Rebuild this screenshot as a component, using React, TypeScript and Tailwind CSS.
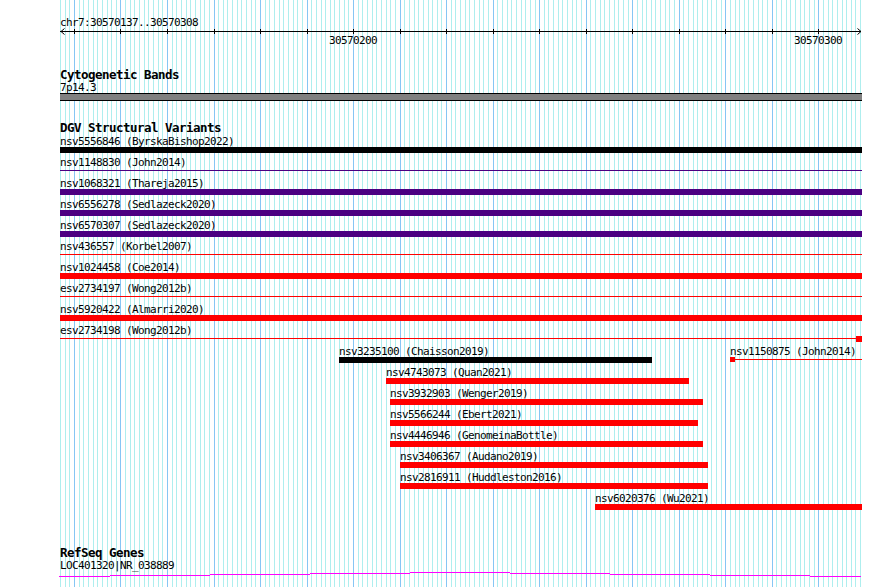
import { FC } from "react";

const LEFT = 60;
const WIDTH = 802;
const PX_PER_BP = 4.652;
const BP_COUNT = 172;

const xAt = (k: number) => Math.round(LEFT + k * PX_PER_BP);

type Feature = {
  label: string;
  x1: number;
  x2: number;
  kind: "thick" | "thin";
  color: string;
  endBox?: "start" | "end";
  boxSize?: number;
};

const colorClass: Record<string, { bg: string }> = {
  black: { bg: "bg-black" },
  purple: { bg: "bg-[#4b0082]" },
  red: { bg: "bg-[#ff0000]" },
};

const rows: Feature[][] = [
  [{ label: "nsv5556846 (ByrskaBishop2022)", x1: 60, x2: 862, kind: "thick", color: "black" }],
  [{ label: "nsv1148830 (John2014)", x1: 60, x2: 862, kind: "thin", color: "purple" }],
  [{ label: "nsv1068321 (Thareja2015)", x1: 60, x2: 862, kind: "thick", color: "purple" }],
  [{ label: "nsv6556278 (Sedlazeck2020)", x1: 60, x2: 862, kind: "thick", color: "purple" }],
  [{ label: "nsv6570307 (Sedlazeck2020)", x1: 60, x2: 862, kind: "thick", color: "purple" }],
  [{ label: "nsv436557 (Korbel2007)", x1: 60, x2: 862, kind: "thin", color: "red" }],
  [{ label: "nsv1024458 (Coe2014)", x1: 60, x2: 862, kind: "thick", color: "red" }],
  [{ label: "esv2734197 (Wong2012b)", x1: 60, x2: 862, kind: "thin", color: "red" }],
  [{ label: "nsv5920422 (Almarri2020)", x1: 60, x2: 862, kind: "thick", color: "red" }],
  [
    {
      label: "esv2734198 (Wong2012b)",
      x1: 60,
      x2: 862,
      kind: "thin",
      color: "red",
      endBox: "end",
      boxSize: 6,
    },
  ],
  [
    { label: "nsv3235100 (Chaisson2019)", x1: 339, x2: 652, kind: "thick", color: "black" },
    {
      label: "nsv1150875 (John2014)",
      x1: 730,
      x2: 862,
      kind: "thin",
      color: "red",
      endBox: "start",
      boxSize: 5,
    },
  ],
  [{ label: "nsv4743073 (Quan2021)", x1: 386, x2: 689, kind: "thick", color: "red" }],
  [{ label: "nsv3932903 (Wenger2019)", x1: 390, x2: 703, kind: "thick", color: "red" }],
  [{ label: "nsv5566244 (Ebert2021)", x1: 390, x2: 698, kind: "thick", color: "red" }],
  [{ label: "nsv4446946 (GenomeinaBottle)", x1: 390, x2: 703, kind: "thick", color: "red" }],
  [{ label: "nsv3406367 (Audano2019)", x1: 400, x2: 708, kind: "thick", color: "red" }],
  [{ label: "nsv2816911 (Huddleston2016)", x1: 400, x2: 708, kind: "thick", color: "red" }],
  [{ label: "nsv6020376 (Wu2021)", x1: 595, x2: 862, kind: "thick", color: "red" }],
];

const geneSteps: [number, number, number][] = [
  [59, 110, 576],
  [110, 210, 575],
  [210, 310, 574],
  [310, 410, 573],
  [410, 510, 572],
  [510, 610, 573],
  [610, 710, 574],
  [710, 810, 575],
  [810, 861, 576],
];

const labelText = "text-[11px] leading-[11px] tracking-[-0.62px] whitespace-nowrap";
const titleText =
  "text-[12.5px] leading-[12px] font-bold tracking-[-0.53px] whitespace-nowrap";

const GridLines: FC = () => {
  const lines = [];
  for (let k = 0; k <= BP_COUNT; k++) {
    const x = xAt(k) + 0.5;
    lines.push(
      <line
        key={k}
        x1={x}
        x2={x}
        y1={0}
        y2={587}
        stroke={k % 10 === 3 ? "#86c6f4" : "#aeeeee"}
        strokeWidth={1}
      />
    );
  }
  return (
    <svg
      className="absolute left-0 top-0"
      width={890}
      height={587}
      shapeRendering="crispEdges"
    >
      {lines}
    </svg>
  );
};

const Ruler: FC = () => {
  const ticks = [];
  for (let k = 3; k <= BP_COUNT; k += 10) ticks.push(xAt(k) - LEFT + 0.5);
  return (
    <>
      <div className={labelText}>chr7:30570137..30570308</div>
      <svg width={WIDTH} height={7} shapeRendering="crispEdges" className="block">
        <line x1={0} x2={801} y1={3.5} y2={3.5} stroke="#000" />
        {ticks.map((x) => (
          <line key={x} x1={x} x2={x} y1={1} y2={6} stroke="#000" />
        ))}
        <polyline
          points="4.5,0.5 1,3.5 4.5,6.5"
          fill="none"
          stroke="#000"
          shapeRendering="auto"
        />
        <polyline
          points="797.5,0.5 801,3.5 797.5,6.5"
          fill="none"
          stroke="#000"
          shapeRendering="auto"
        />
      </svg>
      <div className="relative h-[11px]">
        {[
          { k: 63, text: "30570200" },
          { k: 163, text: "30570300" },
        ].map((t) => (
          <div
            key={t.text}
            className={`absolute top-0 w-[60px] text-center ${labelText}`}
            style={{ left: xAt(t.k) - LEFT - 30 }}
          >
            {t.text}
          </div>
        ))}
      </div>
    </>
  );
};

const FeatureRow: FC<{ features: Feature[] }> = ({ features }) => (
  <div className="relative h-[21px]">
    {features.map((f) => {
      const left = f.x1 - LEFT;
      const width = f.x2 - f.x1;
      const bg = colorClass[f.color].bg;
      const box = f.boxSize ?? 6;
      return (
        <div key={f.label}>
          <div className={`absolute top-0 ${labelText}`} style={{ left }}>
            {f.label}
          </div>
          {f.kind === "thick" ? (
            <div className={`absolute top-[11px] h-[6px] ${bg}`} style={{ left, width }} />
          ) : (
            <div className={`absolute top-[13px] h-[1px] ${bg}`} style={{ left, width }} />
          )}
          {f.endBox === "end" && (
            <div
              className={`absolute top-[11px] ${bg}`}
              style={{ left: left + width - box, width: box, height: box }}
            />
          )}
          {f.endBox === "start" && (
            <div
              className={`absolute top-[11px] ${bg}`}
              style={{ left, width: box, height: box }}
            />
          )}
        </div>
      );
    })}
  </div>
);

export default function App() {
  return (
    <div className="relative w-[890px] h-[587px] overflow-hidden bg-white text-black font-['DejaVu_Sans_Mono',monospace]">
      <GridLines />
      <div className="relative ml-[60px] w-[802px] flex flex-col pt-[17px]">
        <Ruler />

        {/* cytogenetic bands */}
        <div className={`mt-[23px] ${titleText}`}>Cytogenetic Bands</div>
        <div className={`mt-[1px] h-[11px] ${labelText}`}>7p14.3</div>
        <div className="h-[8px] border-y border-black bg-[#808080]" />

        {/* DGV */}
        <div className={`mt-[21px] ${titleText}`}>DGV Structural Variants</div>
        <div className="mt-[2px] flex flex-col">
          {rows.map((r, i) => (
            <FeatureRow key={i} features={r} />
          ))}
        </div>

        {/* RefSeq */}
        <div className={`mt-[33px] ${titleText}`}>RefSeq Genes</div>
        <div className={`mt-[1px] h-[11px] ${labelText}`}>LOC401320|NR_038889</div>
        <svg width={WIDTH + 2} height={7} shapeRendering="crispEdges" className="block -ml-px">
          {geneSteps.map(([a, b, y]) => (
            <rect key={a} x={a - 59} y={y - 571} width={b - a} height={1} fill="#ff00ff" />
          ))}
        </svg>
      </div>
    </div>
  );
}
